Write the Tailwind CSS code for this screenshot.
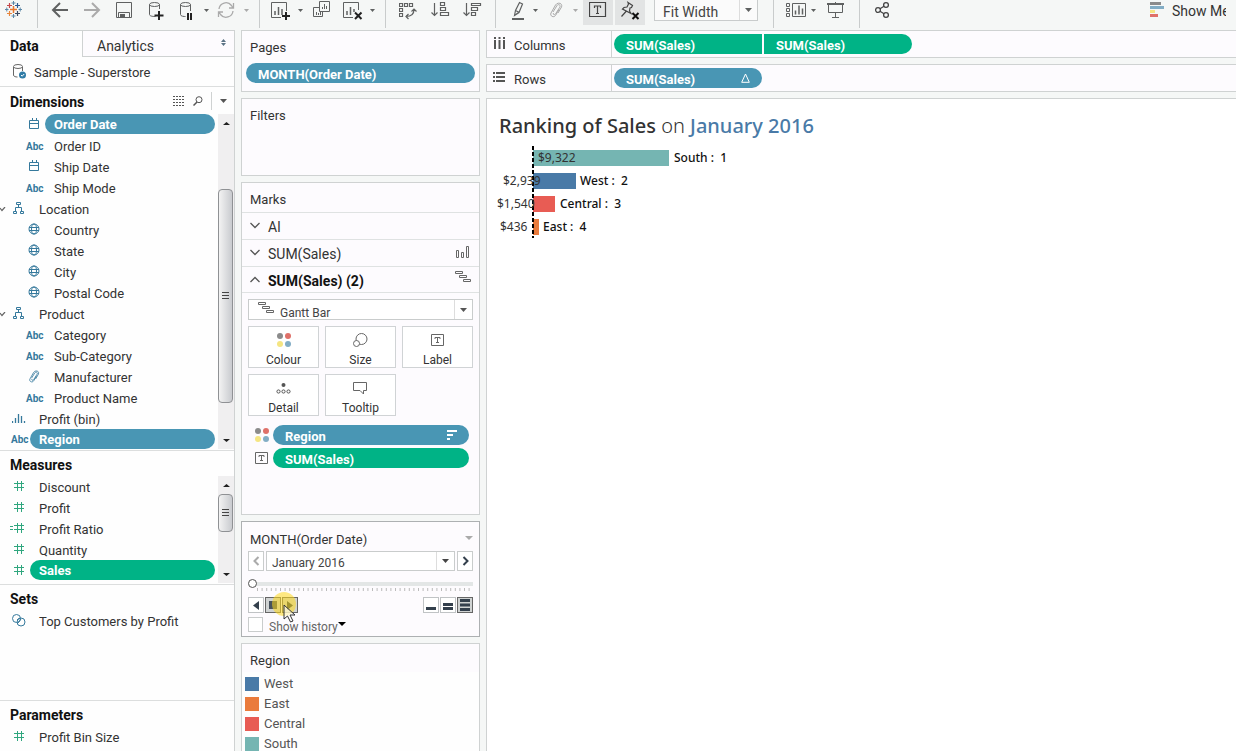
<!DOCTYPE html>
<html lang="en">
<head>
<meta charset="utf-8">
<title>Ranking of Sales</title>
<script src="https://cdn.jsdelivr.net/npm/@tailwindcss/browser@4"></script>
</head>
<body class="flex h-screen flex-col overflow-hidden bg-[#f5f7f6] font-[Roboto,sans-serif] text-[13px] leading-5 text-[#333]">

<svg class="hidden">
  <symbol id="caret" viewBox="0 0 6 4" preserveAspectRatio="none"><path d="M0 0h6L3 4z" fill="currentColor"/></symbol>
  <symbol id="calendar" viewBox="0 0 12 12"><path d="M1.500 2.500h9v8h-9zM1.500 5.500h9M4.500 0v3M8.500 0v3" fill="none" stroke="#35799c"/></symbol>
  <symbol id="globe" viewBox="0 0 12 12"><g fill="none" stroke="#35799c"><circle cx="6" cy="6" r="5"/><ellipse cx="6" cy="6" rx="2.500" ry="5"/><path d="M1 4.500h10M1 7.500h10"/></g></symbol>
  <symbol id="hierarchy" viewBox="0 0 12 12"><path d="M3.500.5h4v2h-4zM.5 9.500h3v2h-3zM7.500 9.500h3v2h-3zM5.500 2.500v3M2.500 9V5.500h6V9" fill="none" stroke="#35799c"/></symbol>
  <symbol id="hash" viewBox="0 0 12 12"><path d="M4.500 1v10M8.500 1v10M1 3.500h10M1 7.500h10" fill="none" stroke="#2fa67e"/></symbol>
  <symbol id="clip" viewBox="0 0 14 16"><path d="M4 10l4-6.500c1.500-2 4-.3 2.800 1.700L6.500 12c-1 1.500-2.800.4-2-1M10 7.500l-3.500 6c-1.700 2.600-6 .5-4.500-2.500L6.500 3C8.500-.2 14 1 12.500 5L9 11" fill="none" stroke="currentColor"/></symbol>
  <symbol id="chev" viewBox="0 0 6 5"><path d="M0 1l2 2.500L5 0" fill="none" stroke="#666" stroke-width="1.200"/></symbol>
  <symbol id="gantt" viewBox="0 0 17 12"><path d="M.5.5h7v2h-7zM4.500 4.500h7v2h-7zM8.500 8.500h7v2h-7z" fill="none" stroke="#666"/></symbol>
  <symbol id="dots" viewBox="0 0 14 14"><circle cx="3" cy="3" r="3" fill="#8b8b8b"/><circle cx="11" cy="3" r="3" fill="#df7069"/><circle cx="3" cy="11" r="3" fill="#f5e582"/><circle cx="11" cy="11" r="3" fill="#82adc5"/></symbol>
  <symbol id="textbox" viewBox="0 0 13 12"><path d="M.5.5h12v11H.5z" fill="none" stroke="#666"/><path d="M4 5V3.500h5V5M6.500 3.500v5M5 8.500h3" fill="none" stroke="#666"/></symbol>
</svg>

<header class="flex h-[30px] shrink-0 items-start text-[#5f6161]">
  <a href="#" aria-label="Start page" class="ml-[5px] w-8"><svg class="h-5 w-[17px]" viewBox="0 0 17 20" fill="none"><path d="M8.500 6v7M5 9.500h7" stroke="#e8762c" stroke-width="1.500"/><path d="M4.500 3v5M2 5.500h5" stroke="#c5484a" stroke-width="1.200"/><path d="M12.500 3v5M10 5.500h5" stroke="#2f5a91" stroke-width="1.200"/><path d="M4.500 11v5M2 13.500h5" stroke="#e8863c" stroke-width="1.200"/><path d="M12.500 11v5M10 13.500h5" stroke="#3a4a62" stroke-width="1.200"/><path d="M8.500 1v4M6.500 3h4M1.800 7.500v4M0 9.500h3.500M15.200 7.500v4M13.500 9.500H17M8.500 14v4M6.500 16h4" stroke="#5a86a6"/></svg></a>
  <span class="h-7 w-px bg-[#c9cccc]"></span>
  <button aria-label="Undo" class="ml-[13px]"><svg class="h-5 w-[18px]" viewBox="0 0 18 20"><path d="M17 10H3M9 3l-7 7 7 7" fill="none" stroke="currentColor" stroke-width="2"/></svg></button>
  <button aria-label="Redo" class="ml-[14px] text-[#aaa]"><svg class="h-5 w-[18px]" viewBox="0 0 18 20"><path d="M1 10h14M9 3l7 7-7 7" fill="none" stroke="currentColor" stroke-width="2"/></svg></button>
  <button aria-label="Save" class="ml-[15px]"><svg class="h-5 w-4" viewBox="0 0 16 20"><path d="M.5 2.500h15v15H.5zM2.500 17.500v-5h11v5" fill="none" stroke="currentColor"/><path d="M4 14h5v3H4z" fill="currentColor"/></svg></button>
  <button aria-label="New data source" class="ml-4"><svg class="h-5 w-4" viewBox="0 0 16 20"><path d="M1.500 4.500v10c0 2 5 2 6 2M11.500 4.500V9" fill="none" stroke="currentColor"/><ellipse cx="6.500" cy="4.500" rx="5" ry="2" fill="none" stroke="currentColor"/><path d="M11 11v9M6.500 15.500h9" stroke="#222" stroke-width="2"/></svg></button>
  <button aria-label="Pause updates" class="ml-[15px]"><svg class="h-5 w-4" viewBox="0 0 16 20"><path d="M1.500 4.500v10c0 2 4 2 5 2M11.500 4.500V11" fill="none" stroke="currentColor"/><ellipse cx="6.500" cy="4.500" rx="5" ry="2" fill="none" stroke="currentColor"/><path d="M9 13v7M12 13v7" stroke="#222" stroke-width="2"/></svg></button>
  <button aria-label="Update options" class="ml-[9px] pt-[9px]"><svg class="h-[3px] w-[5px]"><use href="#caret"/></svg></button>
  <button aria-label="Refresh" class="ml-2 text-[#aaa]"><svg class="h-5 w-[18px]" viewBox="0 0 18 20"><path d="M2 9a7 7 0 0 1 12.500-3.500L16 8M16 11a7 7 0 0 1-12.500 3.500L2 12M16.500 3v5H12M1.500 17v-5H6" fill="none" stroke="currentColor" stroke-width="1.300"/></svg></button>
  <button aria-label="Refresh options" class="ml-[9px] pt-[9px] text-[#aaa]"><svg class="h-[3px] w-[5px]"><use href="#caret"/></svg></button>
  <span class="ml-[10px] h-7 w-px bg-[#c9cccc]"></span>
  <button aria-label="New worksheet" class="ml-[11px]"><svg class="h-5 w-5" viewBox="0 0 20 20"><path d="M10 17.500H.5v-15h15V11" fill="none" stroke="currentColor"/><path d="M4 15v-4M7.500 15V7M11 15V9" stroke="currentColor" stroke-width="1.500"/><path d="M15 12v8M11 16h8" stroke="#222" stroke-width="2"/></svg></button>
  <button aria-label="Worksheet options" class="ml-[7px] pt-[9px]"><svg class="h-[3px] w-[5px]"><use href="#caret"/></svg></button>
  <button aria-label="Duplicate" class="ml-[10px]"><svg class="h-5 w-[18px]" viewBox="0 0 18 20"><path d="M6.500 1.500h10v10h-10zM6 7.500H.5v9h9V12M9.500 9V7M11.500 9V4M13.500 9V6M3.500 15v-3M5.500 15v-2M7.500 15v-3" fill="none" stroke="currentColor"/></svg></button>
  <button aria-label="Clear sheet" class="ml-3"><svg class="h-5 w-5" viewBox="0 0 20 20"><path d="M10 17.500H.5v-15h15V10" fill="none" stroke="currentColor"/><path d="M4 15v-4M7.500 15V7M11 12V9" stroke="currentColor" stroke-width="1.500"/><path d="M12 12.500l6.500 6.500M18.500 12.500L12 19" stroke="#222" stroke-width="2"/></svg></button>
  <button aria-label="Clear options" class="ml-[7px] pt-[9px]"><svg class="h-[3px] w-[5px]"><use href="#caret"/></svg></button>
  <span class="ml-[10px] h-7 w-px bg-[#c9cccc]"></span>
  <button aria-label="Swap rows and columns" class="ml-[13px]"><svg class="h-5 w-[18px]" viewBox="0 0 18 20"><path d="M.5 3.500h3v3h-3zM5.500 3.500h3v3h-3zM10.500 3.500h3v3h-3zM.5 8.500h3v3h-3zM.5 13.500h3v3h-3zM7 16.500c5 0 8-2 8-7M12.500 11.500L15 9l2.500 2.500M9.500 14L7 16.500 9.500 19" fill="none" stroke="currentColor" stroke-width="1.200"/></svg></button>
  <button aria-label="Sort ascending" class="ml-[14px]"><svg class="h-5 w-[19px]" viewBox="0 0 19 20"><path d="M3.500 3v12M.5 12.500l3 3 3-3M9.500 2.500h4v3h-4zM9.500 7.500h5v3h-5zM9.500 12.500h8v3h-8z" fill="none" stroke="currentColor" stroke-width="1.200"/></svg></button>
  <button aria-label="Sort descending" class="ml-[13px]"><svg class="h-5 w-[19px]" viewBox="0 0 19 20"><path d="M3.500 3v12M.5 12.500l3 3 3-3M8.500 3.500h9v2h-9zM8.500 7.500h6v3h-6zM8.500 12.500h4v3h-4z" fill="none" stroke="currentColor" stroke-width="1.200"/></svg></button>
  <span class="ml-[13px] h-7 w-px bg-[#c9cccc]"></span>
  <button aria-label="Highlight" class="ml-4"><svg class="h-5 w-[13px]" viewBox="0 0 13 20"><path d="M2.500 15.500l1-5L7.500 2.500l3 1.500-3.500 8.500zM3.500 10.500l4 2M2.500 15.500l4-3" fill="none" stroke="currentColor" stroke-width="1.200"/><path d="M0 19h12" stroke="currentColor" stroke-width="2"/></svg></button>
  <button aria-label="Highlight options" class="ml-2 pt-[9px]"><svg class="h-[3px] w-[5px]"><use href="#caret"/></svg></button>
  <button aria-label="Group" class="ml-[11px] pt-[2px] text-[#aaa]"><svg class="h-4 w-[14px]"><use href="#clip"/></svg></button>
  <button aria-label="Group options" class="ml-[10px] pt-[9px] text-[#aaa]"><svg class="h-[3px] w-[5px]"><use href="#caret"/></svg></button>
  <button aria-label="Show mark labels" class="ml-[5px] flex h-[25px] w-[30px] justify-center bg-[#e2e4e4]"><svg class="h-5 w-[18px]" viewBox="0 0 18 20"><path d="M.5 2.500h16v14H.5zM5.500 8V6h6v2M8.500 6v8M7 13.500h3" fill="none" stroke="#444" stroke-width="1.200"/></svg></button>
  <button aria-label="Fix axes" class="ml-[2px] flex h-[25px] w-[30px] justify-center bg-[#e2e4e4]"><svg class="h-5 w-5" viewBox="0 0 20 20"><path d="M8 2.500l4.500 3-1 2-1.500.5-.5 3 1.500 2.500L2.500 9 4 7.500l3-.5 1.500-3zM6 11.500L1.500 16.500" fill="none" stroke="#444" stroke-width="1.200"/><path d="M12.500 13l6 6M18.500 13l-6 6" stroke="#111" stroke-width="2"/></svg></button>
  <label class="relative ml-[9px] flex h-[21px] w-[104px] border border-t-0 border-[#c9cccc] bg-[#fbfbfb]"><select aria-label="Fit" class="w-full appearance-none bg-transparent pt-[2px] pl-2 text-sm text-[#444]"><option>Fit Width</option></select><span class="pointer-events-none absolute inset-y-0 right-0 flex w-[18px] items-center justify-center border-l border-[#ddd]"><svg class="h-1 w-[7px]"><use href="#caret"/></svg></span></label>
  <span class="ml-[15px] h-7 w-px bg-[#c9cccc]"></span>
  <button aria-label="Show cards" class="ml-3"><svg class="h-5 w-5" viewBox="0 0 20 20"><path d="M.5 3.500h3v3h-3zM.5 8.500h3v3h-3zM.5 13.500h3v3h-3zM6.500 3.500h13v13h-13z" fill="none" stroke="currentColor"/><path d="M9.500 14.500v-4M13 14.500v-9M16.500 14.500v-6" stroke="currentColor" stroke-width="1.500"/></svg></button>
  <button aria-label="Card options" class="ml-[5px] pt-[9px]"><svg class="h-[3px] w-[5px]"><use href="#caret"/></svg></button>
  <button aria-label="Presentation mode" class="ml-[11px]"><svg class="h-5 w-[18px]" viewBox="0 0 18 20"><path d="M0 4h17" stroke="currentColor" stroke-width="2"/><path d="M1.500 4v8.500h14V4M8.500 2v15M5 17.500h7" fill="none" stroke="currentColor"/><path d="M2 5h13v7H2z" fill="#f5f7f6"/></svg></button>
  <span class="ml-[14px] h-7 w-px bg-[#c9cccc]"></span>
  <button aria-label="Share" class="ml-[15px]"><svg class="h-5 w-[15px]" viewBox="0 0 15 20"><g fill="none" stroke="#444" stroke-width="1.300"><circle cx="3" cy="10" r="2.400"/><circle cx="11" cy="5" r="2.400"/><circle cx="11" cy="15" r="2.400"/><path d="M5 8.700l4-2.400M5 11.300l4 2.400"/></g></svg></button>
  <button class="mr-[10px] ml-auto flex items-center gap-2 text-sm leading-[22px] text-[#333]"><svg class="mb-[3px] h-[15px] w-[14px]" viewBox="0 0 14 15"><path d="M0 0h11v3H0z" fill="#8b8b8b"/><path d="M0 4h14v3H0z" fill="#82adc5"/><path d="M0 8h5v3H0z" fill="#f5e582"/><path d="M0 12h8v3H0z" fill="#df7069"/></svg><span class="w-[54px] overflow-hidden whitespace-nowrap">Show Me</span></button>
</header>

<div class="flex min-h-0 flex-1 gap-[6px]">

  <aside class="flex w-[235px] shrink-0 flex-col border-t border-r border-[#cfd2d2] bg-[#fefefe]">
    <div class="flex h-[26px] shrink-0">
      <button class="w-[82px] pt-[3px] pl-[10px] text-left text-sm font-bold text-[#111]">Data</button>
      <button class="flex flex-1 items-center border-b border-l border-[#cfd2d2] bg-[#fdfbfe] pt-1 pr-2 pl-[14px] text-left text-sm text-[#333]"><span class="flex-1">Analytics</span><svg class="mb-[6px] h-[7px] w-[5px]" viewBox="0 0 5 7"><path d="M0 3l2.500-3L5 3zM0 4h5L2.500 7z" fill="#5b7385"/></svg></button>
    </div>
    <div class="flex h-[30px] shrink-0 items-center gap-2 border-b border-[#dcdede] pt-[2px] pl-3"><svg class="mb-[2px] h-[15px] w-[14px]" viewBox="0 0 14 15"><path d="M1.500 3v8c0 1.500 2 2 4 2M10.500 3v4" fill="none" stroke="#666"/><ellipse cx="6" cy="2.500" rx="4.500" ry="2" fill="none" stroke="#666"/><circle cx="10.500" cy="11" r="3.500" fill="#2f7ba6"/><path d="M9 11l1.200 1.200L12.200 10" fill="none" stroke="#fff"/></svg>Sample - Superstore</div>

    <section class="h-[364px] shrink-0 border-b border-[#dcdede]">
      <div class="flex h-[27px] items-center pl-[10px]">
        <h2 class="flex-1 pt-[3px] text-sm font-bold text-[#111]">Dimensions</h2>
        <button aria-label="View data"><svg class="h-[10px] w-[13px]" viewBox="0 0 13 10"><path d="M0 .5h12M0 3.500h12M0 6.500h12M0 9.500h12" stroke="#555" stroke-dasharray="2 1"/></svg></button>
        <button aria-label="Find field" class="ml-[7px]"><svg class="h-[10px] w-[10px]" viewBox="0 0 10 10"><g fill="none" stroke="#555"><circle cx="6" cy="3.700" r="3"/><path d="M4 6L.5 9.500" stroke-width="1.500"/></g></svg></button>
        <span class="ml-2 h-[18px] w-px bg-[#cfd2d2]"></span>
        <button aria-label="Dimensions menu" class="mr-[7px] ml-2"><svg class="h-1 w-[7px] text-[#555]"><use href="#caret"/></svg></button>
      </div>
      <div class="flex">
        <ul class="min-w-0 flex-1 text-[#333] [&>li]:flex [&>li]:h-[21px] [&>li]:items-center [&>li]:pt-[2px]">
          <li class="pl-7 !items-start !pt-0"><svg class="mt-1 h-3 w-3"><use href="#calendar"/></svg><span class="mr-[3px] ml-[5px] h-5 flex-1 rounded-full bg-[#4996b4] pt-[2px] pl-[9px] leading-[18px] font-bold text-white">Order Date</span></li>
          <li class="pl-[26px]"><b class="w-7 text-[10px] leading-4 text-[#35799c]">Abc</b>Order ID</li>
          <li class="gap-[14px] pl-7"><svg class="mb-1 h-3 w-3"><use href="#calendar"/></svg>Ship Date</li>
          <li class="pl-[26px]"><b class="w-7 text-[10px] leading-4 text-[#35799c]">Abc</b>Ship Mode</li>
          <li><svg class="h-[5px] w-[6px]"><use href="#chev"/></svg><svg class="mr-[14px] mb-[3px] ml-[7px] h-3 w-3"><use href="#hierarchy"/></svg>Location</li>
          <li class="gap-[14px] pl-7"><svg class="mb-[3px] h-3 w-3"><use href="#globe"/></svg>Country</li>
          <li class="gap-[14px] pl-7"><svg class="mb-[3px] h-3 w-3"><use href="#globe"/></svg>State</li>
          <li class="gap-[14px] pl-7"><svg class="mb-[3px] h-3 w-3"><use href="#globe"/></svg>City</li>
          <li class="gap-[14px] pl-7"><svg class="mb-[3px] h-3 w-3"><use href="#globe"/></svg>Postal Code</li>
          <li><svg class="h-[5px] w-[6px]"><use href="#chev"/></svg><svg class="mr-[14px] mb-[3px] ml-[7px] h-3 w-3"><use href="#hierarchy"/></svg>Product</li>
          <li class="pl-[26px]"><b class="w-7 text-[10px] leading-4 text-[#35799c]">Abc</b>Category</li>
          <li class="pl-[26px]"><b class="w-7 text-[10px] leading-4 text-[#35799c]">Abc</b>Sub-Category</li>
          <li class="gap-[14px] pl-7"><svg class="mb-[3px] h-[13px] w-3 text-[#35799c]"><use href="#clip"/></svg>Manufacturer</li>
          <li class="pl-[26px]"><b class="w-7 text-[10px] leading-4 text-[#35799c]">Abc</b>Product Name</li>
          <li class="gap-[13px] pl-3"><svg class="mb-1 h-[10px] w-[14px]" viewBox="0 0 14 10"><path d="M.5 8v2M3.500 5v5M6.500 1v9M9.500 3v7M12.500 8v2" stroke="#35799c" stroke-width="1.300"/></svg>Profit (bin)</li>
          <li class="pl-[11px] !items-start !pt-0"><b class="w-[19px] pt-px text-[10px] text-[#35799c]">Abc</b><span class="mr-[3px] h-5 flex-1 rounded-full bg-[#4996b4] pt-[2px] pl-[9px] leading-[18px] font-bold text-white">Region</span></li>
        </ul>
        <div class="flex h-[335px] w-4 flex-col items-center bg-[#f0eff0]">
          <svg class="mt-2 h-[3px] w-[7px] shrink-0 rotate-180 text-[#222]"><use href="#caret"/></svg>
          <div class="mt-16 mr-px flex h-[214px] w-[15px] items-center justify-center rounded-sm border border-[#8f9194] bg-linear-to-r from-[#f3f3f3] to-[#c9cbcf]"><svg class="h-2 w-[7px]" viewBox="0 0 7 8"><path d="M0 .5h7M0 3.500h7M0 6.500h7" stroke="#444"/></svg></div>
          <svg class="mt-9 h-[3px] w-[7px] shrink-0 text-[#222]"><use href="#caret"/></svg>
        </div>
      </div>
    </section>

    <section class="h-[134px] shrink-0 border-b border-[#dcdede]">
      <h2 class="h-[25px] pt-[3px] pl-[10px] text-sm leading-[22px] font-bold text-[#111]">Measures</h2>
      <div class="flex">
        <ul class="min-w-0 flex-1 [&>li]:flex [&>li]:h-[21px] [&>li]:items-center [&>li]:pt-[2px]">
          <li class="gap-[14px] pl-[13px]"><svg class="mb-[3px] h-3 w-3"><use href="#hash"/></svg>Discount</li>
          <li class="gap-[14px] pl-[13px]"><svg class="mb-[3px] h-3 w-3"><use href="#hash"/></svg>Profit</li>
          <li class="pl-[10px]"><svg class="mb-[3px] h-1 w-[3px]" viewBox="0 0 3 4"><path d="M0 .5h3M0 3.500h3" stroke="#2fa67e"/></svg><svg class="mr-[14px] mb-[3px] h-3 w-3"><use href="#hash"/></svg>Profit Ratio</li>
          <li class="gap-[14px] pl-[13px]"><svg class="mb-[3px] h-3 w-3"><use href="#hash"/></svg>Quantity</li>
          <li class="pl-[13px] !items-start !pt-0"><svg class="mt-1 h-3 w-3"><use href="#hash"/></svg><span class="mr-[3px] ml-[5px] h-5 flex-1 rounded-full bg-[#00b386] pt-[2px] pl-[9px] leading-[18px] font-bold text-white">Sales</span></li>
        </ul>
        <div class="flex h-[107px] w-4 flex-col items-center bg-[#f0eff0]">
          <svg class="mt-2 h-[3px] w-[7px] shrink-0 rotate-180 text-[#222]"><use href="#caret"/></svg>
          <div class="mt-[7px] mr-px flex h-[38px] w-[15px] items-center justify-center rounded-sm border border-[#8f9194] bg-linear-to-r from-[#f3f3f3] to-[#c9cbcf]"><svg class="h-2 w-[7px]" viewBox="0 0 7 8"><path d="M0 .5h7M0 3.500h7M0 6.500h7" stroke="#444"/></svg></div>
          <svg class="mt-[41px] h-[3px] w-[7px] shrink-0 text-[#222]"><use href="#caret"/></svg>
        </div>
      </div>
    </section>

    <section class="h-[116px] shrink-0 border-b border-[#dcdede]">
      <h2 class="h-[25px] pt-[3px] pl-[10px] text-sm leading-[22px] font-bold text-[#111]">Sets</h2>
      <div class="flex h-[23px] items-center gap-[13px] pl-3"><svg class="mb-[3px] h-[13px] w-[14px]" viewBox="0 0 14 13"><g fill="none" stroke="#35799c"><circle cx="4.500" cy="4.500" r="4"/><circle cx="9" cy="8" r="4"/><path d="M5 6l3-2M6 9l3-4"/></g></svg>Top Customers by Profit</div>
    </section>
    <section class="shrink-0">
      <h2 class="h-[25px] pt-[3px] pl-[10px] text-sm leading-[22px] font-bold text-[#111]">Parameters</h2>
      <div class="flex h-[23px] items-center gap-[14px] pl-[13px]"><svg class="mb-[3px] h-3 w-3"><use href="#hash"/></svg>Profit Bin Size</div>
    </section>
  </aside>

  <div class="flex w-[239px] shrink-0 flex-col gap-[6px]">
    <section class="h-[62px] shrink-0 border border-[#cfd2d2] bg-[#fdfbfe] px-1 pt-[7px]">
      <h2 class="pl-1">Pages</h2>
      <div class="mt-[5px] h-5 rounded-full bg-[#4996b4] pt-[2px] pl-3 font-bold text-white">MONTH(Order Date)</div>
    </section>
    <section class="h-[78px] shrink-0 border border-[#cfd2d2] bg-[#fdfbfe] pt-[7px] pl-2"><h2>Filters</h2></section>

    <section class="h-[333px] shrink-0 border border-[#cfd2d2] bg-[#fdfbfe]">
      <h2 class="h-[30px] border-b border-[#dfe2e2] pt-[7px] pl-2">Marks</h2>
      <button class="flex h-[27px] w-full items-center gap-2 border-b border-[#dfe2e2] px-2 pt-[2px] text-left text-sm"><svg class="mb-[3px] h-[7px] w-[10px]" viewBox="0 0 10 7"><path d="M.5 1l4.500 4.500L9.500 1" fill="none" stroke="#555" stroke-width="1.300"/></svg>Al</button>
      <button class="flex h-[27px] w-full items-center gap-2 border-b border-[#dfe2e2] px-2 pt-[2px] text-left text-sm"><svg class="mb-[3px] h-[7px] w-[10px]" viewBox="0 0 10 7"><path d="M.5 1l4.500 4.500L9.500 1" fill="none" stroke="#555" stroke-width="1.300"/></svg><span class="flex-1">SUM(Sales)</span><svg class="mr-px mb-1 h-3 w-[14px]" viewBox="0 0 14 12"><path d="M.5 4.500h2v7h-2zM5.500 6.500h2v5h-2zM10.500.5h2v11h-2z" fill="none" stroke="#666"/></svg></button>
      <button class="flex h-[26px] w-full items-center gap-2 border-b border-[#dfe2e2] pt-[3px] pr-[7px] pl-2 text-left text-sm font-bold text-[#111]"><svg class="mb-1 h-[7px] w-[10px]" viewBox="0 0 10 7"><path d="M.5 6L5 1.500 9.500 6" fill="none" stroke="#555" stroke-width="1.300"/></svg><span class="flex-1">SUM(Sales) (2)</span><svg class="mb-2 h-3 w-[17px]"><use href="#gantt"/></svg></button>
      <div class="px-[6px] pt-[6px]">
        <label class="relative flex h-[21px] items-center border border-[#c9cccc] bg-white"><svg class="mb-1 ml-[9px] h-3 w-[17px] shrink-0"><use href="#gantt"/></svg><select aria-label="Mark type" class="h-full flex-1 appearance-none bg-transparent pt-[5px] pl-[5px] text-xs text-[#444]"><option>Gantt Bar</option></select><span class="pointer-events-none absolute inset-y-0 right-0 flex w-[18px] items-center justify-center border-l border-[#ddd]"><svg class="h-1 w-[7px] text-[#555]"><use href="#caret"/></svg></span></label>
        <div class="mt-[6px] grid grid-cols-3 gap-[6px] text-xs leading-[14px] [&>button]:flex [&>button]:h-[42px] [&>button]:flex-col [&>button]:items-center [&>button]:justify-between [&>button]:overflow-hidden [&>button]:border [&>button]:border-[#d0d3d5] [&>button]:bg-white [&>button]:pt-[6px]">
          <button><svg class="h-[14px] w-[14px]"><use href="#dots"/></svg>Colour</button>
          <button><svg class="h-[14px] w-[15px]" viewBox="0 0 15 14"><g fill="none" stroke="#666"><circle cx="8.500" cy="6" r="5.500"/><circle cx="3.500" cy="10.500" r="3" fill="#fff"/></g></svg>Size</button>
          <button><svg class="mt-px h-3 w-[13px]"><use href="#textbox"/></svg>Label</button>
          <button><svg class="mt-[2px] h-[11px] w-[15px]" viewBox="0 0 15 11"><circle cx="7.500" cy="2" r="2" fill="#555"/><g fill="none" stroke="#555"><circle cx="2.500" cy="8.500" r="1.600"/><circle cx="7.500" cy="8.500" r="1.600"/><circle cx="12.500" cy="8.500" r="1.600"/></g></svg>Detail</button>
          <button><svg class="h-[14px] w-[15px]" viewBox="0 0 15 14"><path d="M.5 1.500h13v8h-3V13L7 9.500H.5z" fill="none" stroke="#666"/></svg>Tooltip</button>
        </div>
        <div class="mt-[9px] flex items-center gap-1 pr-1 pl-[7px]"><svg class="h-[14px] w-[14px]"><use href="#dots"/></svg><div class="flex h-5 flex-1 items-center rounded-full bg-[#4996b4] pr-3 pl-3 font-bold text-white"><span class="flex-1 pt-[3px]">Region</span><svg class="h-[11px] w-[10px]" viewBox="0 0 10 11"><path d="M0 1h10M0 5h6M0 9h3" stroke="#fff" stroke-width="2"/></svg></div></div>
        <div class="mt-[3px] flex items-center gap-[5px] pr-1 pl-[7px]"><svg class="h-3 w-[13px]"><use href="#textbox"/></svg><div class="h-5 flex-1 rounded-full bg-[#00b386] pt-[2px] pl-3 font-bold text-white">SUM(Sales)</div></div>
      </div>
    </section>

    <section class="relative h-[116px] shrink-0 border border-[#adb0b2] bg-[#fdfbfe] px-[6px] pt-[6px] text-[#47525d]">
      <div class="flex h-[23px] items-center justify-between pl-[2px] text-[#333]"><h2>MONTH(Order Date)</h2><button aria-label="Page control menu"><svg class="mb-1 h-1 w-2 text-[#aaa]"><use href="#caret"/></svg></button></div>
      <div class="flex h-5 gap-[2px]">
        <button aria-label="Previous" class="flex w-4 items-center justify-center border border-[#c9cccc] bg-white"><svg class="h-[10px] w-[7px]" viewBox="0 0 7 10"><path d="M5.500 1l-4 4 4 4" fill="none" stroke="#aaa" stroke-width="2"/></svg></button>
        <label class="relative flex flex-1 border border-[#c9cccc] bg-white"><select aria-label="Month" class="w-full appearance-none bg-transparent pt-[3px] pl-[5px] text-xs text-[#444]"><option>January 2016</option></select><span class="pointer-events-none absolute inset-y-0 right-0 flex w-[18px] items-center justify-center border-l border-[#ddd]"><svg class="h-1 w-[7px] text-[#444]"><use href="#caret"/></svg></span></label>
        <button aria-label="Next" class="flex w-4 items-center justify-center border border-[#c9cccc] bg-white"><svg class="h-[10px] w-[7px]" viewBox="0 0 7 10"><path d="M1.500 1l4 4-4 4" fill="none" stroke="#333f4c" stroke-width="2"/></svg></button>
      </div>
      <div class="mt-2 flex flex-col">
        <input type="range" aria-label="Page" min="0" max="48" value="0" class="h-[9px] w-full appearance-none bg-transparent [&::-webkit-slider-runnable-track]:h-1 [&::-webkit-slider-runnable-track]:bg-[#e3e6e6] [&::-webkit-slider-thumb]:-mt-[3px] [&::-webkit-slider-thumb]:h-[9px] [&::-webkit-slider-thumb]:w-[9px] [&::-webkit-slider-thumb]:appearance-none [&::-webkit-slider-thumb]:rounded-full [&::-webkit-slider-thumb]:border [&::-webkit-slider-thumb]:border-[#555] [&::-webkit-slider-thumb]:bg-white">
        <svg class="h-[3px] w-full"><path d="M9 1.500h213" stroke="#bbb" stroke-width="3" stroke-dasharray="1 3.600"/></svg>
      </div>
      <div class="mt-[6px] flex h-4 gap-px [&>button]:flex [&>button]:w-4 [&>button]:items-center [&>button]:justify-center [&>button]:border [&>button]:border-[#c0c3c5]">
        <button aria-label="Play backward" class="bg-white"><svg class="h-[9px] w-[6px]" viewBox="0 0 6 9"><path d="M6 0v9L0 4.500z" fill="#333f4c"/></svg></button>
        <button aria-label="Stop" class="!border-[#666] bg-[#d0d3d3]"><svg class="h-2 w-2" viewBox="0 0 8 8"><path d="M0 0h8v8H0z" fill="#47525d"/></svg></button>
        <button aria-label="Play forward" class="mr-auto !border-[#666] bg-[#d0d3d3]"><svg class="h-[9px] w-[6px]" viewBox="0 0 6 9"><path d="M0 0v9l6-4.500z" fill="#333f4c"/></svg></button>
        <button aria-label="Slow" class="bg-white"><svg class="h-[10px] w-[10px]" viewBox="0 0 10 10"><path d="M0 8.500h10" stroke="#333f4c" stroke-width="3"/></svg></button>
        <button aria-label="Medium" class="bg-white"><svg class="h-[10px] w-[10px]" viewBox="0 0 10 10"><path d="M0 4.500h10M0 8.500h10" stroke="#333f4c" stroke-width="3"/></svg></button>
        <button aria-label="Fast" class="!border-[#666] bg-[#d0d3d3]"><svg class="h-3 w-[10px]" viewBox="0 0 10 12"><path d="M0 1.500h10M0 6h10M0 10.500h10" stroke="#333f4c" stroke-width="3"/></svg></button>
      </div>
      <div class="mt-1 flex h-5 text-xs leading-5 text-[#666]"><label class="flex gap-[6px]"><input type="checkbox" class="h-[15px] w-[15px] appearance-none border border-[#c9cccc] bg-white"><span>Show history</span></label><button aria-label="History options" class="self-start pt-[5px]"><svg class="block h-1 w-2 text-black"><use href="#caret"/></svg></button></div>
      <span class="absolute top-[70px] left-[30px] h-6 w-6 rounded-full bg-[#ffd91a]/55"></span>
      <svg class="absolute top-[82px] left-[41px] h-5 w-[13px]" viewBox="0 0 13 20"><path d="M1 1v14l3.500-3 3 6 2.500-1-3-6H12z" fill="#fff" fill-opacity=".6" stroke="#333"/></svg>
    </section>

    <section class="min-h-[115px] flex-1 border border-[#cfd2d2] bg-[#fdfbfe]">
      <h2 class="h-7 pt-[7px] pl-2">Region</h2>
      <ul class="bg-[#fefefe] px-[3px] text-[#555] [&>li]:flex [&>li]:h-5 [&>li]:items-center [&>li]:gap-[5px] [&>li]:pt-[3px]">
        <li><span class="h-[14px] w-[14px] bg-[#497aa7]"></span>West</li>
        <li><span class="h-[14px] w-[14px] bg-[#ea7b3c]"></span>East</li>
        <li><span class="h-[14px] w-[14px] bg-[#e85c54]"></span>Central</li>
        <li><span class="h-[14px] w-[14px] bg-[#75b5b2]"></span>South</li>
      </ul>
    </section>
  </div>

  <main class="flex min-w-0 flex-1 flex-col gap-[6px]">
    <section class="flex h-7 shrink-0 border border-r-0 border-[#cfd2d2] bg-[#fdfbfe]">
      <h2 class="flex w-[125px] items-center gap-[9px] border-r border-[#cfd2d2] pt-[3px] pl-[7px]"><svg class="mb-[5px] h-3 w-[11px]" viewBox="0 0 11 12"><path d="M1 3v9M5.500 3v9M10 3v9M1 0v2M5.500 0v2M10 0v2" stroke="#555" stroke-width="2"/></svg>Columns</h2>
      <div class="flex gap-[2px] pt-[3px] pl-[2px] font-bold text-white"><div class="h-5 w-[148px] rounded-l-full bg-[#00b386] pt-[2px] pl-3">SUM(Sales)</div><div class="h-5 w-[148px] rounded-r-full bg-[#00b386] pt-[2px] pl-3">SUM(Sales)</div></div>
    </section>
    <section class="flex h-7 shrink-0 border border-r-0 border-[#cfd2d2] bg-[#fdfbfe]">
      <h2 class="flex w-[125px] items-center gap-[9px] border-r border-[#cfd2d2] pt-[3px] pl-[6px]"><svg class="mb-[5px] h-[10px] w-3" viewBox="0 0 12 10"><path d="M0 1h2M0 5h2M0 9h2M3 1h9M3 5h9M3 9h9" stroke="#555" stroke-width="2"/></svg>Rows</h2>
      <div class="pt-[3px] pl-[2px] font-bold text-white"><div class="flex h-5 w-[148px] items-center rounded-full bg-[#4996b4] pr-3 pl-3"><span class="flex-1 pt-[3px]">SUM(Sales)</span><svg class="h-[10px] w-[9px]" viewBox="0 0 9 10"><path d="M4.500 1L8.300 9.300H.7z" fill="none" stroke="#fff"/></svg></div></div>
    </section>
    <section class="flex-1 border border-r-0 border-b-0 border-[#cfd2d2] bg-white pt-[14px] pl-[10px] font-['Noto_Sans',sans-serif]">
      <h1 class="pl-[2px] text-xl leading-[26px] font-medium text-[#333]">Ranking of Sales <span class="font-light">on</span> <span class="text-[#497aa7]">January 2016</span></h1>
      <svg class="mt-[7px] h-[92px] w-[280px] text-xs" role="img" aria-label="Sales by region">
        <path d="M36 4h136v16H36z" fill="#75b5b2"/><path d="M36 27h43v16H36z" fill="#497aa7"/><path d="M36 50h22v16H36z" fill="#e85c54"/><path d="M36 73h6v16H36z" fill="#ea7b3c"/>
        <path d="M36 0v92" stroke="#000" stroke-width="2" stroke-dasharray="4 2"/>
        <g fill="#333"><text x="41" y="16">$9,322</text><text x="6" y="39">$2,939</text><text x="0" y="62">$1,540</text><text x="3" y="85">$436</text></g>
        <g fill="#111" class="font-medium"><text x="177" y="16">South :&#160; 1</text><text x="83" y="39">West :&#160; 2</text><text x="63" y="62">Central :&#160; 3</text><text x="46" y="85">East :&#160; 4</text></g>
      </svg>
    </section>
  </main>
</div>
</body>
</html>
